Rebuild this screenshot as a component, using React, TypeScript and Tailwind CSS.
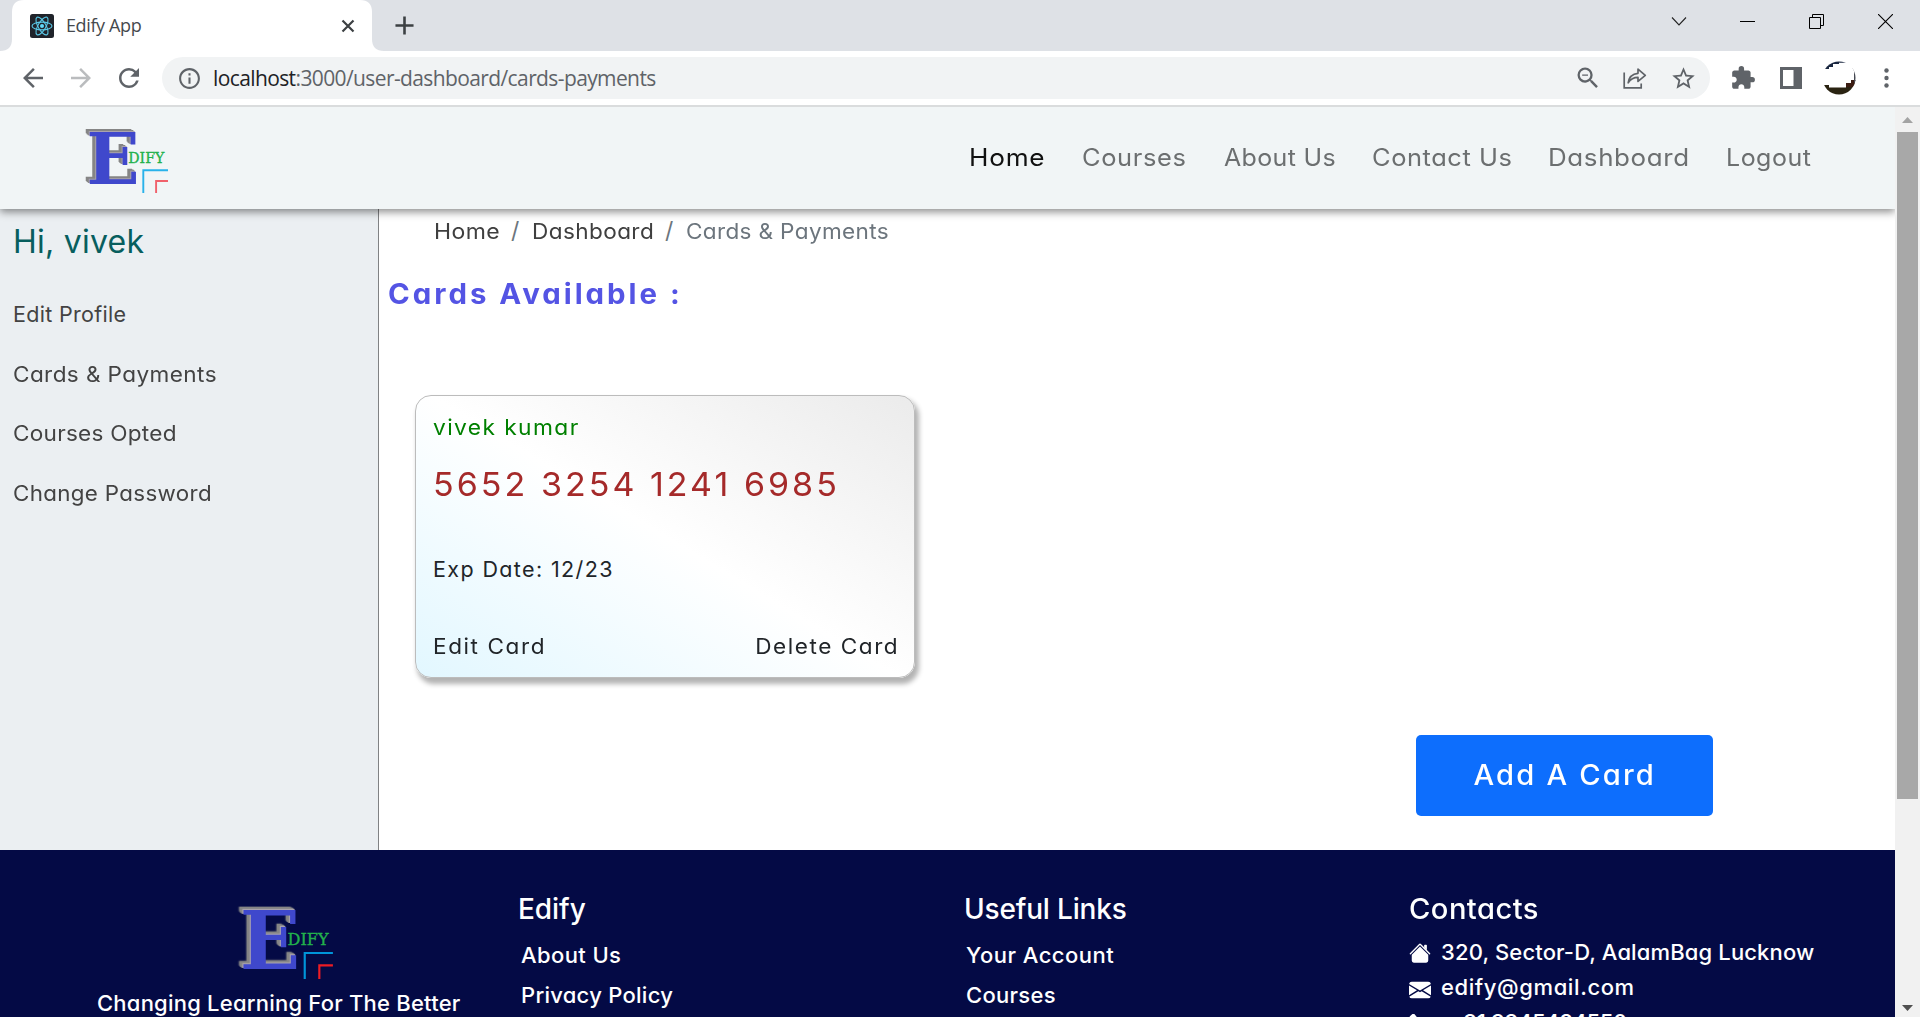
import React from "react";
import {
  MdAdd,
  MdArrowBack,
  MdArrowForward,
  MdExtension,
  MdInfoOutline,
  MdRefresh,
  MdStarBorder,
  MdOutlineZoomOut,
} from "react-icons/md";

function ReactFavicon() {
  return (
    <svg viewBox="0 0 24 24" className="h-6 w-6 shrink-0">
      <rect width="24" height="24" rx="2.5" fill="#20232a" />
      <g fill="none" stroke="#61dafb" strokeWidth="1.1" opacity="0.9">
        <ellipse cx="12" cy="12" rx="10" ry="3.9" />
        <ellipse cx="12" cy="12" rx="10" ry="3.9" transform="rotate(60 12 12)" />
        <ellipse cx="12" cy="12" rx="10" ry="3.9" transform="rotate(120 12 12)" />
      </g>
      <circle cx="12" cy="12" r="2" fill="#61dafb" />
    </svg>
  );
}

function EdifyLogo({ className, dark = false }: { className: string; dark?: boolean }) {
  return (
    <svg viewBox="0 0 84 64" className={className}>
      <text
        x="2.4"
        y="55.2"
        fontFamily="DejaVu Serif, serif"
        fontWeight="700"
        fontSize="71"
        textLength="53"
        lengthAdjust="spacingAndGlyphs"
        fill="#3f48cc"
        className="[filter:drop-shadow(-1px_-0.6px_0_#a9a3ae)_drop-shadow(-1.3px_-1px_0_#858585)_drop-shadow(-1px_-0.6px_0_#858585)]"
      >
        E
      </text>
      <text
        x="44.3"
        y="34"
        fontFamily="DejaVu Serif, serif"
        fontSize="15"
        textLength="36"
        lengthAdjust="spacingAndGlyphs"
        fill="#22b14c"
        stroke="#22b14c"
        strokeWidth="0.35"
      >
        DIFY
      </text>
      <path d="M59.3 64V41.2H84" fill="none" stroke={dark ? "#0095d9" : "#29b2ea"} strokeWidth="1.9" />
      <path d="M72.1 64V52H84" fill="none" stroke={dark ? "#ed1c24" : "#f0616b"} strokeWidth="1.9" />
    </svg>
  );
}

function TabStrip() {
  return (
    <div className="flex h-[51px] shrink-0 bg-[#dee1e6]">
      <svg viewBox="0 0 384 51" className="absolute h-[51px] w-[384px]">
        <path d="M0 51C8 51 12 47 12 39V12C12 4 16 0 24 0H360C368 0 372 4 372 12V39C372 47 376 51 384 51Z" fill="#fff" />
      </svg>
      <div className="relative flex h-[51px] w-[372px] items-center pl-[30px]">
        <ReactFavicon />
        <span className="mb-[2px] ml-3 w-[275px] font-['Open_Sans'] text-[18px] leading-6 tracking-[-0.38px] text-[#45494d]">
          Edify App
        </span>
        <svg viewBox="0 0 14 14" className="h-[14px] w-[14px]">
          <path d="M1.5 1.5L12.5 12.5M12.5 1.5L1.5 12.5" stroke="#3c4043" strokeWidth="2.2" />
        </svg>
      </div>
      <MdAdd className="mt-[10px] ml-[17px] size-[31px] text-[#3c4043]" />
      <div className="ml-auto flex items-start pt-[14px] pr-[27px]">
        <svg viewBox="0 0 16 16" className="mr-[53px] size-4" fill="none" stroke="#222" strokeWidth="1.1">
          <path d="M1 3.5L8 11L15 3.5" />
        </svg>
        <svg viewBox="0 0 15 15" className="mr-[54px] size-[15px]">
          <path d="M0 7.5H15" stroke="#000" />
        </svg>
        <svg viewBox="0 0 15 15" className="mr-[54px] size-[15px]" fill="none" stroke="#000">
          <path d="M.5 3.5H11.5V14.5H.5ZM3.5 3.5V.5H14.5V11.5H11.5" />
        </svg>
        <svg viewBox="0 0 15 15" className="size-[15px]" stroke="#000" strokeWidth="1.1">
          <path d="M0 0L15 15M15 0L0 15" />
        </svg>
      </div>
    </div>
  );
}

function Toolbar() {
  return (
    <div className="flex h-[56px] shrink-0 items-center border-b-2 border-[#dadcdd] bg-white pl-[18px] text-[#5f6368]">
      <MdArrowBack className="size-[30px] shrink-0" />
      <MdArrowForward className="ml-[18px] size-[30px] shrink-0 text-[#babcbe]" />
      <MdRefresh className="ml-[18px] size-[30px] shrink-0" />
      <div className="ml-[18px] flex h-[42px] w-[1548px] shrink-0 items-center rounded-full bg-[#f1f3f4] pr-[13px] pl-[15px]">
        <MdInfoOutline className="size-[25px] shrink-0" />
        <span className="ml-[11px] font-['Open_Sans'] text-[21px] leading-7 tracking-[-0.61px] whitespace-pre">
          <span className="text-[#202124]">localhost</span>:3000/user-dashboard/cards-payments
        </span>
        <MdOutlineZoomOut className="ml-auto size-[28px]" />
        <svg viewBox="0 0 24 22" className="ml-[21px] h-[22px] w-[24px]" fill="none" stroke="#5f6368" strokeWidth="1.7">
          <path d="M1.2 5.5V20.8H18.2V16.5" />
          <path d="M5.2 15.8C6 10 9 6.9 15 6.3V2.2L22.3 8.4L15 14.4V10.4C10.8 10.4 7.6 12 5.2 15.8Z" strokeLinejoin="round" />
        </svg>
        <MdStarBorder className="ml-[23px] size-[27px]" />
      </div>
      <MdExtension className="ml-[20px] size-[26px] shrink-0" />
      <svg viewBox="0 0 22 22" className="ml-[24px] size-[22px] shrink-0">
        <path d="M0 0H22V22H0ZM3 3V19H13.5V3Z" fill="#5f6368" fillRule="evenodd" />
      </svg>
      <svg viewBox="0 0 34 34" className="ml-[20px] size-[34px] shrink-0">
        <defs>
          <clipPath id="avatar">
            <circle cx="17" cy="17" r="16.5" />
          </clipPath>
        </defs>
        <g clipPath="url(#avatar)">
          <path d="M0 24H7V26.5H24V22H29V19H34V34H0Z" fill="#2a2312" />
          <path d="M24 26V22H29V19H34V26Z" fill="#3b1c12" />
          <path d="M30 6L34 10V22H32V10Z" fill="#454852" />
          <path d="M2 8H7V6H11V3H17V1.8H27V0H8Z" fill="#1a2740" />
        </g>
      </svg>
      <svg viewBox="0 0 5 20" className="ml-[28px] h-[20px] w-[5px] shrink-0" fill="#5f6368">
        <circle cx="2.5" cy="2.5" r="2.2" />
        <circle cx="2.5" cy="10" r="2.2" />
        <circle cx="2.5" cy="17.5" r="2.2" />
      </svg>
    </div>
  );
}

function NavBar() {
  return (
    <header className="relative z-10 flex h-[102px] shrink-0 items-center bg-[#f1f5f6] shadow-[0_3px_8px_rgba(0,0,0,0.45)]">
      <EdifyLogo className="mt-[5px] ml-[84px] h-[64px] w-[84px]" />
      <nav className="ml-auto flex w-[925.7px] text-[24px] leading-9 text-[#6c6f70]">
        <a className="w-[112.7px] origin-left scale-x-[1.09] tracking-[0.7px] text-[#111]">Home</a>
        <a className="w-[142.4px] origin-left scale-x-[1.06] tracking-[0.6px]">Courses</a>
        <a className="w-[147.6px] origin-left scale-x-[1.04] tracking-[0.35px]">About Us</a>
        <a className="w-[176px] origin-left scale-x-[1.06] tracking-[0.53px]">Contact Us</a>
        <a className="w-[178px] origin-left scale-x-[1.08] tracking-[0.58px]">Dashboard</a>
        <a className="origin-left scale-x-[1.04] tracking-[0.5px]">Logout</a>
      </nav>
    </header>
  );
}

function Sidebar() {
  return (
    <aside className="flex w-[379px] shrink-0 flex-col border-r border-[#808284] bg-[#ebeff2] pt-[9px] pl-[13px] text-[21.5px] leading-[59.4px] text-[#434343]">
      <h2 className="mb-[19.3px] text-[32px] leading-[48px] tracking-[0.25px] text-[#075e5e]">Hi, vivek</h2>
      <a className="tracking-[0.3px]">Edit Profile</a>
      <a className="origin-left scale-x-[1.05] tracking-[0.38px]">Cards &amp; Payments</a>
      <a className="origin-left scale-x-[1.05] tracking-[0.24px]">Courses Opted</a>
      <a className="origin-left scale-x-[1.04] tracking-[0.32px]">Change Password</a>
    </aside>
  );
}

function PaymentCard() {
  return (
    <article className="mt-[81px] ml-[36px] flex h-[283px] w-[500px] flex-col rounded-[16px] border border-[#bcbcbc] bg-[linear-gradient(31deg,#e2f7ff_0%,#ffffff_50%,#ebebeb_100%)] pt-[15px] pr-[15px] pl-[17px] text-[21.5px] leading-8 text-[#212529] shadow-[3px_5px_5px_1px_rgba(0,0,0,0.3)]">
      <p className="origin-left scale-x-[1.06] tracking-[1.31px] text-[#008000]">vivek kumar</p>
      <p className="mt-[16.7px] origin-left scale-x-[1.03] text-[33px] leading-[48px] tracking-[2.95px] whitespace-nowrap text-[#a52a2a]">
        5652 3254 1241 6985
      </p>
      <p className="mt-[45.5px] tracking-[1.38px]">Exp Date: 12/23</p>
      <div className="mt-[45px] flex justify-between">
        <a className="origin-left scale-x-[1.05] tracking-[1.5px]">Edit Card</a>
        <a className="origin-right scale-x-[1.05] tracking-[1.48px]">Delete Card</a>
      </div>
    </article>
  );
}

function CardsPage() {
  return (
    <main className="flex grow flex-col bg-white pt-[6px]">
      <div className="flex pl-[55px] text-[21.5px] leading-8 whitespace-nowrap text-[#6c757d]">
        <a className="w-[77px] origin-left scale-x-[1.07] tracking-[0.36px] text-[#3f3f3f]">Home</a>
        <span className="w-[21px] text-[23px]">/</span>
        <a className="w-[133px] origin-left scale-x-[1.05] tracking-[0.38px] text-[#3f3f3f]">Dashboard</a>
        <span className="w-[21px] text-[23px]">/</span>
        <span className="origin-left scale-x-[1.05] tracking-[0.32px]">Cards &amp; Payments</span>
      </div>
      <h1 className="mt-[27px] ml-[9px] origin-left scale-x-[1.05] self-start text-[28px] leading-10 font-bold tracking-[2.82px] text-[#5454e4]">
        Cards Available :
      </h1>
      <PaymentCard />
      <button className="mt-[57px] ml-[1037px] h-[81px] w-[297px] rounded-[5px] bg-[#0d6efd] pb-[1px] pl-[1px] text-[28px] font-medium text-white">
        <span className="inline-block scale-x-[1.04] tracking-[2.1px]">Add A Card</span>
      </button>
    </main>
  );
}

function Footer() {
  return (
    <footer className="flex h-[167px] shrink-0 overflow-hidden bg-[#040a45] text-[22px] leading-10 font-medium whitespace-nowrap text-white">
      <section className="flex w-[518px] shrink-0 flex-col pt-[56px]">
        <EdifyLogo dark className="ml-[237px] h-[73px] w-[96px] shrink-0" />
        <p className="mt-[4px] ml-[97px] shrink-0 tracking-[0.22px]">Changing Learning For The Better</p>
      </section>
      <section className="flex w-[446px] shrink-0 flex-col pt-[39px]">
        <h3 className="text-[28px] tracking-[-0.06px]">Edify</h3>
        <div className="mt-[6px] flex flex-col pl-[3px]">
          <a className="tracking-[0.39px]">About Us</a>
          <a className="tracking-[0.27px]">Privacy Policy</a>
        </div>
      </section>
      <section className="flex w-[445px] shrink-0 flex-col pt-[39px]">
        <h3 className="text-[28px] tracking-[-0.17px]">Useful Links</h3>
        <div className="mt-[6px] flex flex-col pl-[2px]">
          <a className="tracking-[0.49px]">Your Account</a>
          <a className="tracking-[0.3px]">Courses</a>
        </div>
      </section>
      <section className="flex flex-col pt-[39px] leading-[35px]">
        <h3 className="origin-left scale-x-[1.04] self-start text-[28px] leading-10 tracking-[0.45px]">Contacts</h3>
        <div className="mt-[5.5px] flex items-center">
          <svg viewBox="0 0 16 16" className="mt-[2px] mr-[10px] size-[22px]" fill="currentColor">
            <path d="m8 3.293 6 6V13.5a1.5 1.5 0 0 1-1.5 1.5h-9A1.5 1.5 0 0 1 2 13.5V9.293l6-6zm5-.793V6l-2-2V2.5a.5.5 0 0 1 .5-.5h1a.5.5 0 0 1 .5.5z" />
            <path d="M7.293 1.5a1 1 0 0 1 1.414 0l6.647 6.646a.5.5 0 0 1-.708.708L8 2.207 1.354 8.854a.5.5 0 1 1-.708-.708L7.293 1.5z" />
          </svg>
          <span className="tracking-[0.14px]">320, Sector-D, AalamBag Lucknow</span>
        </div>
        <div className="flex items-center">
          <svg viewBox="0 0 16 16" className="mt-[5px] mr-[10px] size-[22px]" fill="currentColor">
            <path d="M.05 3.555A2 2 0 0 1 2 2h12a2 2 0 0 1 1.95 1.555L8 8.414.05 3.555zM0 4.697v7.104l5.803-3.558L0 4.697zM6.761 8.83l-6.57 4.027A2 2 0 0 0 2 14h12a2 2 0 0 0 1.808-1.144l-6.57-4.027L8 9.586l-1.239-.757zm3.436-.586L16 11.801V4.697l-5.803 3.546z" />
          </svg>
          <span className="tracking-[0.6px]">edify@gmail.com</span>
        </div>
        <div className="flex items-center">
          <svg viewBox="0 0 16 16" className="mt-[5px] mr-[18px] size-[22px]" fill="currentColor">
            <path d="M1.885.511a1.745 1.745 0 0 1 2.61.163L6.29 2.98c.329.423.445.974.315 1.494l-.547 2.19a.678.678 0 0 0 .178.643l2.457 2.457a.678.678 0 0 0 .644.178l2.189-.547a1.745 1.745 0 0 1 1.494.315l2.306 1.794c.829.645.905 1.87.163 2.611l-1.034 1.034c-.74.74-1.846 1.065-2.877.702a18.634 18.634 0 0 1-7.01-4.42 18.634 18.634 0 0 1-4.42-7.009c-.362-1.03-.037-2.137.703-2.877L1.885.511z" />
          </svg>
          <span className="tracking-[-0.4px]">+91 9945484550</span>
        </div>
      </section>
    </footer>
  );
}

function Scrollbar() {
  return (
    <div className="flex w-[25px] shrink-0 flex-col items-center bg-[#f1f1f1] pt-[10px] pb-[6px]">
      <svg viewBox="0 0 11 6" className="h-[6px] w-[11px] shrink-0">
        <path d="M0 6L5.5 0L11 6Z" fill="#a3a3a3" />
      </svg>
      <div className="mt-[9px] h-[667px] w-[21px] shrink-0 bg-[#a8a8a8]" />
      <svg viewBox="0 0 11 6" className="mt-auto h-[6px] w-[11px] shrink-0">
        <path d="M0 0L5.5 6L11 0Z" fill="#505050" />
      </svg>
    </div>
  );
}

export default function App() {
  return (
    <div className="flex h-[1017px] w-[1920px] flex-col overflow-hidden font-['Inter','Liberation_Sans',sans-serif]">
      <TabStrip />
      <Toolbar />
      <div className="flex h-[910px]">
        <div className="flex w-[1895px] flex-col overflow-hidden [font-feature-settings:'cv11']">
          <NavBar />
          <div className="flex h-[641px] shrink-0">
            <Sidebar />
            <CardsPage />
          </div>
          <Footer />
        </div>
        <Scrollbar />
      </div>
    </div>
  );
}
